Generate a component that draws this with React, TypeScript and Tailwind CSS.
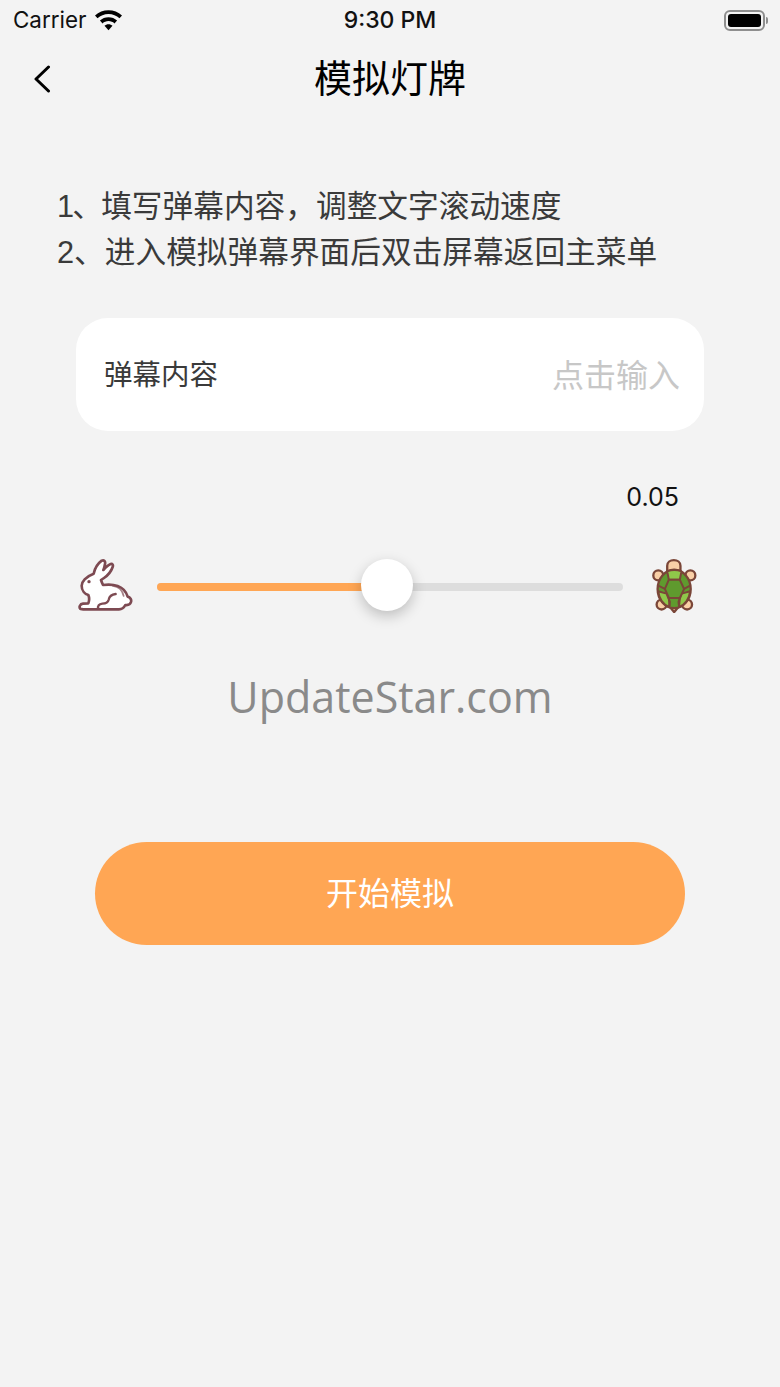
import React from "react";

const cjk = "font-['Liberation_Sans','Noto_Sans_CJK_SC',sans-serif]";

const RabbitIcon = () => (
  <svg width="55" height="55" viewBox="55 40 165 165" fill="none">
    <path
      d="M62 193c-5-6-1-15 8-16l16-1c3-8 3-18 0-25-10-3-20-13-20-28 0-12 12-27 36-36 3-14 12-30 24-39 7-3 12 2 10 10-1 6-2 12-5 18 7-8 14-15 22-18 6-1 8 4 6 9-4 12-13 24-26 33l-9 6c2 6 4 11 6 15 14-2 30-2 44 3 16 6 26 18 30 32 8 2 12 9 10 16-2 7-9 10-17 9-4 8-10 13-19 13H74c-5 0-9-1-12-1z"
      fill="#ffffff"
      stroke="#7d4a52"
      strokeWidth="8"
      strokeLinejoin="round"
    />
    <path d="M116 192c-3-8 2-14 12-15 12-1 17-4 19-12 2-10 10-16 21-17" stroke="#7d4a52" strokeWidth="7" strokeLinecap="round" />
    <path d="M160 124c16 2 28 12 32 30" stroke="#7d4a52" strokeWidth="5" strokeLinecap="round" opacity="0.7" />
    <circle cx="88" cy="111" r="5" fill="#7d4a52" />
  </svg>
);

const TurtleIcon = () => (
  <svg width="48" height="55" viewBox="60 35 145 165" fill="none">
    <g fill="#f9cfa6" stroke="#7a4638" strokeWidth="7">
      <path d="M112 85V58c0-10 9-17 20-17s20 7 20 17v27z" />
      <circle cx="85" cy="87" r="15" />
      <circle cx="182" cy="87" r="15" />
      <circle cx="95" cy="175" r="15" />
      <circle cx="172" cy="175" r="15" />
      <path d="M120 182h26l-13 16z" />
    </g>
    <ellipse cx="133" cy="128" rx="50" ry="58" fill="#5f9a2e" stroke="#7a4638" strokeWidth="7" />
    <g stroke="#7a4638" strokeWidth="6" strokeLinejoin="round">
      <path d="M112 75c13-5 30-5 43 0l-5 25h-33z" fill="#8fc84a" />
      <path d="M85 135l25 7 10 25-2 15c-18-6-31-25-33-47z" fill="#8fc84a" />
      <path d="M181 135l-25 7-10 25 2 15c18-6 31-25 33-47z" fill="#8fc84a" />
      <path d="M117 100h33l13 28-13 27h-33l-12-27z" fill="#5f9a2e" />
      <path d="M85 118l20 10M181 118l-18 10M117 155l2 25M150 155l-2 25" />
    </g>
  </svg>
);

const App = () => {
  return (
    <div className={`w-[780px] h-[1387px] bg-[#f3f3f3] flex flex-col ${cjk}`}>
      <div className="h-[40px] relative flex items-center justify-between pl-[13px] pr-[12px] font-['Inter',sans-serif]">
        <div className="flex items-center gap-[9px]">
          <span className="text-[22.400px] leading-none text-[#111]">Carrier</span>
          <svg width="27" height="21" viewBox="0 0 29 22" fill="#000">
            <path d="M14.500 0C9 0 4 2 0 5.600l2.700 3C5.800 5.700 10 4 14.500 4s8.700 1.700 11.800 4.600l2.700-3C25 2 20 0 14.500 0z" />
            <path d="M14.500 7.500c-3.500 0-6.800 1.300-9.200 3.600l2.800 3c1.700-1.500 3.900-2.500 6.400-2.500s4.700 1 6.400 2.500l2.800-3c-2.400-2.300-5.700-3.600-9.200-3.600z" />
            <path d="M14.500 15c-1.700 0-3.200.6-4.300 1.700l4.300 4.800 4.300-4.800C17.700 15.600 16.200 15 14.500 15z" />
          </svg>
        </div>
        <span className="absolute left-0 right-0 text-center text-[23px] font-medium leading-none text-[#111]">
          9:30 PM
        </span>
        <div className="flex items-center gap-[1px]">
          <div className="w-[41px] h-[21px] rounded-[6px] border-2 border-[#8e8e8e] p-[2px]">
            <div className="w-full h-full rounded-[3px] bg-black" />
          </div>
          <div className="w-[2px] h-[7px] rounded-r-sm bg-[#8e8e8e]" />
        </div>
      </div>

      <div className="relative h-[78px] flex items-center justify-center">
        <svg className="absolute left-[33px] top-[25px]" width="18" height="28" viewBox="0 0 18 28" fill="none">
          <path d="M15.500 2L3 14l12.500 12" stroke="#000" strokeWidth="3" strokeLinecap="round" strokeLinejoin="round" />
        </svg>
        <h1 className="text-[38px] leading-none font-normal text-black">模拟灯牌</h1>
      </div>

      <div className="mt-[66px] pl-[57px] text-[30.700px] leading-[46px] text-[#3a3a3a]">
        <p>
          <span className="tracking-[-1.800px]">1、</span>填写弹幕内容，调整文字滚动速度
        </p>
        <p>2、进入模拟弹幕界面后双击屏幕返回主菜单</p>
      </div>

      <div className="mt-[42px] mx-[76px] h-[113px] rounded-[32px] bg-white flex items-center justify-between pt-[2px] pl-[28px] pr-[24px]">
        <span className="text-[28.500px] text-[#3a3a3a]">弹幕内容</span>
        <span className="text-[32px] text-[#c7c7c7]">点击输入</span>
      </div>

      <div className="mt-[51px] pr-[101px] text-right font-['Inter',sans-serif] text-[25px] leading-[30px] text-[#111]">0.05</div>

      <div className="mt-[46px] flex items-center pl-[78px] pr-[82px] h-[55px]">
        <RabbitIcon />
        <div className="relative ml-[24px] flex-1 h-[8px] rounded-full bg-[#dddddd] mt-[3px]">
          <div className="h-full w-[230px] rounded-full bg-[#ffa654]" />
          <div className="absolute left-[204px] top-[-24px] w-[52px] h-[52px] rounded-full bg-white shadow-[0_5px_14px_rgba(0,0,0,0.22)]" />
        </div>
        <div className="ml-[27px]">
          <TurtleIcon />
        </div>
      </div>

      <div className="mt-[53px] text-center font-['Open_Sans',sans-serif] text-[43px] leading-[62px] text-[#8a8a8a]">
        UpdateStar.com
      </div>

      <div className="mt-[114px] mx-[95px] h-[103px] rounded-full bg-[#ffa654] flex items-center justify-center text-[32px] text-white">
        开始模拟
      </div>
    </div>
  );
};

export default App;
